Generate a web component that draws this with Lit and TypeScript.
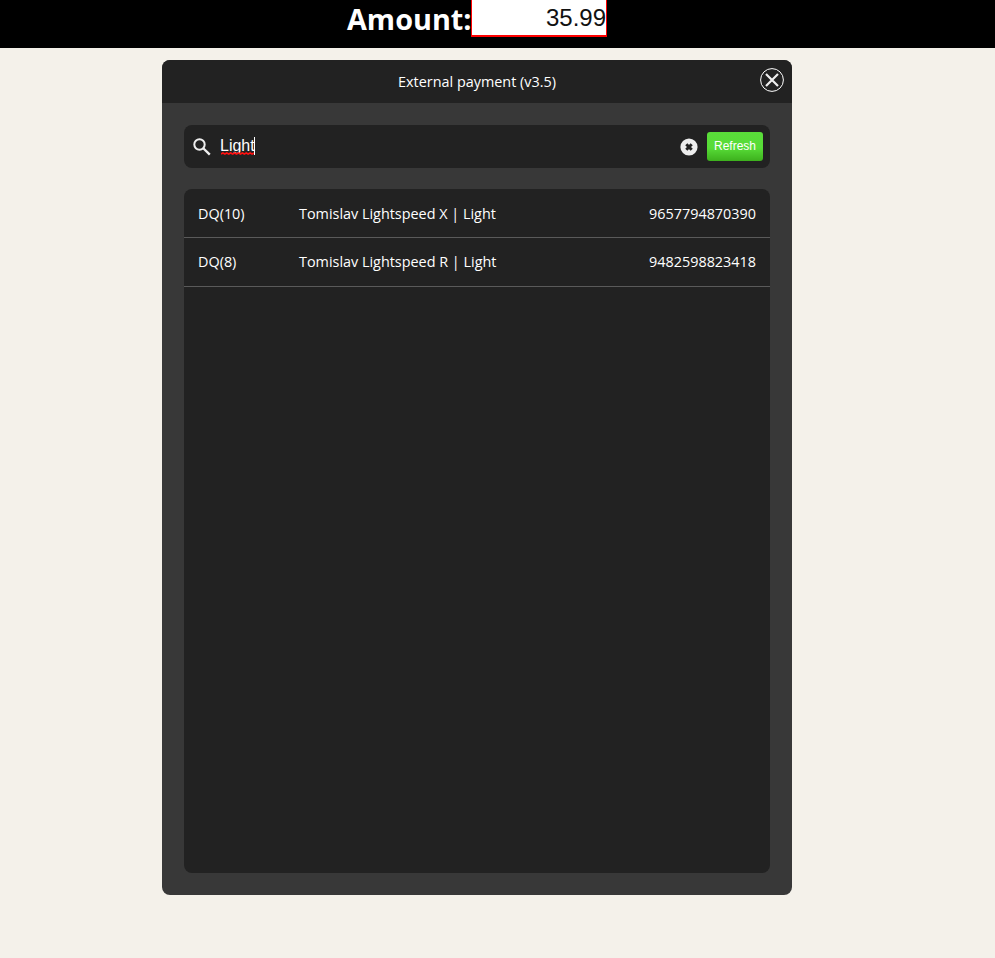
import { LitElement, html, css } from "lit";
import { customElement } from "lit/decorators.js";

const rows = [
  { a: "DQ(10)", b: "Tomislav Lightspeed X | Light", c: "9657794870390" },
  { a: "DQ(8)", b: "Tomislav Lightspeed R | Light", c: "9482598823418" },
];

@customElement("app-root")
export class AppRoot extends LitElement {
  static styles = css`
    :host { display: block; min-height: 958px; background: #f4f1ea; font-family: "Open Sans", sans-serif; overflow: hidden; }
    .top { height: 48px; background: #000; display: flex; align-items: flex-start; padding-left: 347px; box-sizing: border-box; }
    .label { width: 124px; flex: none; white-space: nowrap; color: #fff; font-weight: 700; font-size: 28.8px; line-height: 38px; }
    .amount { width: 136px; flex: none; height: 39px; margin-top: -2px; box-sizing: border-box; background: #fff; border: solid #f00; border-width: 1px 1px 2px; font: 24px/38px "Liberation Sans", sans-serif; color: #111; text-align: right; }
    .modal { width: 630px; height: 835px; margin: 12px 0 0 162px; background: #383838; border-radius: 8px; display: flex; flex-direction: column; overflow: hidden; }
    .head { height: 43px; flex: none; background: #222; display: flex; align-items: center; justify-content: center; position: relative; color: #fff; font-size: 14.4px; }
    .close { position: absolute; top: 8px; right: 8px; width: 24px; height: 24px; display: block; }
    .body { flex: 1; padding: 22px; display: flex; flex-direction: column; gap: 21px; min-height: 0; }
    .search { height: 43px; flex: none; background: #222; border-radius: 8px; display: flex; align-items: center; padding: 0 7px 0 9px; }
    .search-icon { width: 18px; height: 18px; flex: none; margin-right: 9px; margin-top: 1px; }
    .term { flex: 1; color: #fff; font: 16px/18px "Liberation Sans", sans-serif; margin-top: -2px; }
    .term span { position: relative; display: inline-block; width: 34px; border-right: 1px solid #fff; }
    .squiggle { position: absolute; left: 1px; bottom: 0; width: 33px; height: 3px; display: block; }
    .clear { width: 18px; height: 18px; flex: none; margin-right: 9px; margin-left: -1px; margin-top: 1px; }
    .refresh { width: 56px; height: 29px; flex: none; border-radius: 3px; background: linear-gradient(#5add3a 0%, #57dc37 55%, #3db01d 100%); color: #fff; font: 12px/28px "Liberation Sans", sans-serif; text-align: center; }
    .list { flex: 1; background: #222; border-radius: 8px; min-height: 0; overflow: hidden; }
    .row { height: 48.8px; box-sizing: border-box; display: flex; align-items: center; padding: 0 14px; color: #fff; font-size: 14.4px; border-bottom: 1px solid #5a5a5a; }
    .row:first-child { padding-top: 0.8px; }
    .a { width: 101px; flex: none; }
    .b { flex: 1; }
  `;

  render() {
    return html`
      <div class="top">
        <div class="label">Amount:</div>
        <div class="amount">35.99</div>
      </div>
      <div class="modal">
        <div class="head">
          External payment (v3.5)
          <svg class="close" viewBox="0 0 24 24" fill="none" stroke="#fff">
            <circle cx="12" cy="12" r="11.4" stroke-width="1"></circle>
            <path d="M6 6 18 18M18 6 6 18" stroke="#eeeeee" stroke-width="2.2"></path>
          </svg>
        </div>
        <div class="body">
          <div class="search">
            <svg class="search-icon" viewBox="0 0 18 18" fill="none" stroke="#eeeeee">
              <circle cx="6.5" cy="6.5" r="5.2" stroke-width="2"></circle>
              <path d="M10.5 10.5 16.8 16.6" stroke-width="2.4"></path>
            </svg>
            <div class="term"><span>Light<svg class="squiggle" viewBox="0 0 34 3" preserveAspectRatio="none" fill="none"><path d="M0 2 2 1 4 2 6 1 8 2 10 1 12 2 14 1 16 2 18 1 20 2 22 1 24 2 26 1 28 2 30 1 32 2 34 1" stroke="#ff1010" stroke-width="1.6"></path></svg></span></div>
            <svg class="clear" viewBox="0 0 18 18">
              <circle cx="9" cy="9" r="8.6" fill="#eeeeee"></circle>
              <path d="M6.3 6.3 11.7 11.7M11.7 6.3 6.3 11.7" stroke="#222" stroke-width="3"></path>
            </svg>
            <div class="refresh">Refresh</div>
          </div>
          <div class="list">
            ${rows.map((r) => html`
              <div class="row">
                <div class="a">${r.a}</div>
                <div class="b">${r.b}</div>
                <div class="c">${r.c}</div>
              </div>
            `)}
          </div>
        </div>
      </div>
    `;
  }
}
